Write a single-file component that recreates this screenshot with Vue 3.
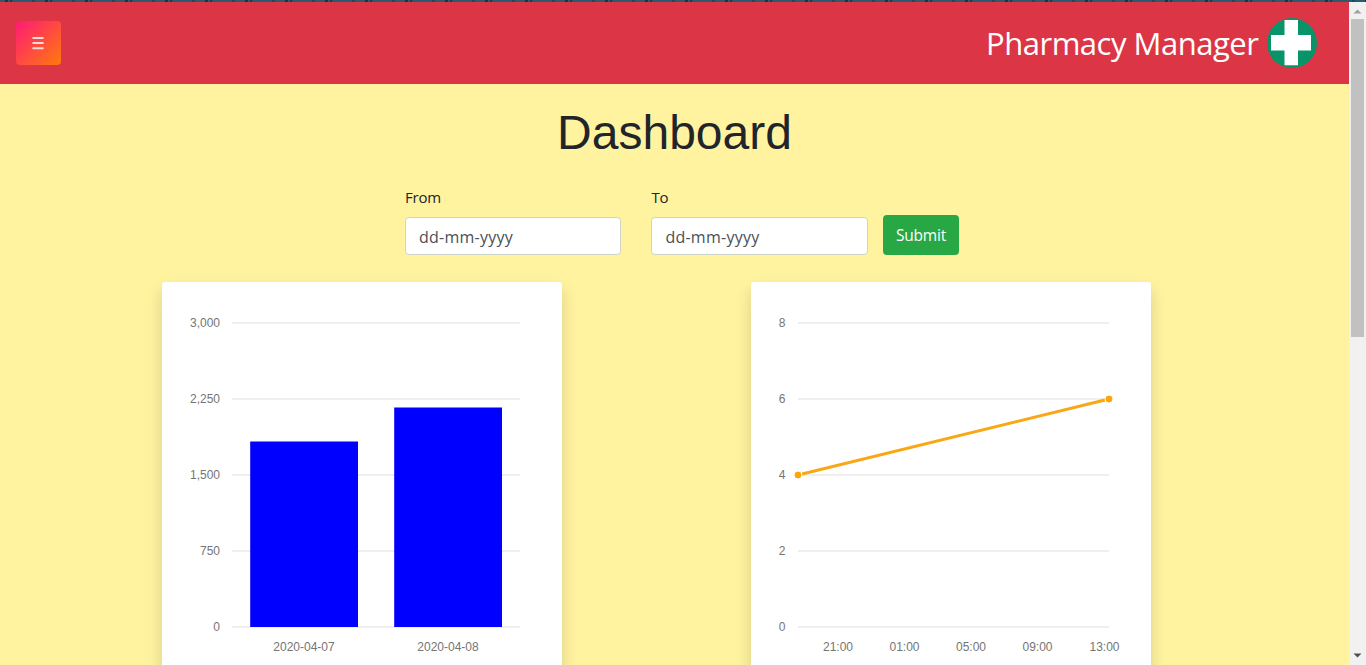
<script setup>
const rows = [41, 117, 193, 269, 345]
const salesTicks = ['3,000', '2,250', '1,500', '750', '0']
const orderTicks = ['8', '6', '4', '2', '0']
const bars = [
  { label: '2020-04-07', x: 88, y: 159.5 },
  { label: '2020-04-08', x: 232, y: 125.5 },
]
const hours = [
  { label: '21:00', x: 87 },
  { label: '01:00', x: 153.5 },
  { label: '05:00', x: 220 },
  { label: '09:00', x: 286.5 },
  { label: '13:00', x: 353.5 },
]
</script>

<template>
  <div class="window">
    <div class="edge"></div>
    <div class="viewport">
      <main class="page">
        <header class="navbar">
          <button class="menu" aria-label="Menu">
            <svg width="12" height="14" viewBox="0 0 12 14">
              <path d="M1.2 2h9.6M1.2 7.1h9.6M1.2 12.2h9.6" stroke="#ffdcd8" stroke-width="2" stroke-linecap="round" />
            </svg>
          </button>
          <div class="brand">
            <span class="brand-name">Pharmacy Manager</span>
            <svg width="50" height="50" viewBox="0 0 50 50">
              <circle cx="25" cy="25" r="25" fill="#089468" />
              <path d="M17.500 2h13.500v15H44v15.500H31v14.800H17.500V32.500H4V17h13.500z" fill="#fff" />
            </svg>
          </div>
        </header>

        <h1 class="title">Dashboard</h1>

        <form class="filters" @submit.prevent>
          <div class="field">
            <label>From</label>
            <div class="control"><span>dd-mm-yyyy</span></div>
          </div>
          <div class="field">
            <label>To</label>
            <div class="control"><span>dd-mm-yyyy</span></div>
          </div>
          <button class="submit">Submit</button>
        </form>

        <section class="cards">
          <article class="card">
            <svg class="chart" width="400" height="400" viewBox="0 0 400 400">
              <g v-for="(y, i) in rows" :key="y">
                <path :d="`M70 ${y}H358`" class="grid" />
                <text x="58" :y="y + 4" text-anchor="end">{{ salesTicks[i] }}</text>
              </g>
              <g v-for="b in bars" :key="b.label">
                <rect :x="b.x + 0.2" :y="b.y" width="107.800" :height="345 - b.y" fill="#00f" />
                <text :x="b.x + 54" y="369" text-anchor="middle">{{ b.label }}</text>
              </g>
            </svg>
          </article>
          <article class="card">
            <svg class="chart" width="400" height="400" viewBox="0 0 400 400">
              <g v-for="(y, i) in rows" :key="y">
                <path :d="`M47 ${y}H358`" class="grid" />
                <text x="34.500" :y="y + 4" text-anchor="end">{{ orderTicks[i] }}</text>
              </g>
              <path d="M47 193L358 117" stroke="#f9a715" stroke-width="3" />
              <circle cx="47" cy="193" r="4" class="dot" />
              <circle cx="358" cy="117" r="4" class="dot" />
              <text v-for="h in hours" :key="h.label" :x="h.x" y="369" text-anchor="middle">{{ h.label }}</text>
            </svg>
          </article>
        </section>
      </main>

      <aside class="scrollbar">
        <svg width="9" height="5" viewBox="0 0 9 5"><path d="M0.500 4.500L4.500 0.500L8.500 4.500z" fill="#a0a0a0" /></svg>
        <div class="thumb"></div>
        <svg class="down" width="9" height="5" viewBox="0 0 9 5"><path d="M0.500 0.500L4.500 4.500L8.500 0.500z" fill="#505050" /></svg>
      </aside>
    </div>
  </div>
</template>

<style>
body {
  overflow: hidden;
}
</style>

<style scoped>
* {
  box-sizing: border-box;
}
.window {
  width: 1366px;
  height: 665px;
  display: flex;
  flex-direction: column;
  overflow: hidden;
  font-family: "Open Sans", "Noto Sans", sans-serif;
  font-size: 16px;
  line-height: 24px;
  color: #212529;
}
.edge {
  height: 2px;
  flex: none;
  background: repeating-linear-gradient(90deg, #2c5b70 0 5px, #173444 5px 8px, #2c5b70 8px 10px, #1b3d4e 10px 12px, #2c5b70 12px 32px, #224a5c 32px 35px, #2c5b70 35px 40px);
}
.viewport {
  display: flex;
  flex: 1;
  min-height: 0;
}
.page {
  width: 1349px;
  background: #fff3a0;
  overflow: hidden;
}
.navbar {
  height: 82px;
  background: #dc3646;
  display: flex;
  align-items: center;
  justify-content: space-between;
  padding: 0 32px 0 16px;
}
.menu {
  width: 45px;
  height: 44px;
  display: flex;
  align-items: center;
  justify-content: center;
  padding: 0 2px 0 0;
  border: 0;
  border-radius: 4px;
  background: linear-gradient(135deg, #ff1a75, #ff7a0d);
}
.brand {
  display: flex;
  align-items: center;
  gap: 10px;
  color: #fff;
}
.brand-name {
  width: 271px;
  font-size: 31px;
  line-height: 48px;
  letter-spacing: -0.48px;
  white-space: nowrap;
}
.title {
  margin: 20px 0 0;
  text-align: center;
  font: 400 48px/58px "Liberation Sans", Arial, sans-serif;
}
.filters {
  display: flex;
  align-items: flex-end;
  margin: 24px 0 0 405px;
  height: 69px;
}
.field {
  width: 216.400px;
  margin-right: 30px;
}
.field + .field {
  margin-right: 15.200px;
}
label {
  display: block;
  font-size: 15px;
  letter-spacing: -0.2px;
  margin-bottom: 8px;
}
.control {
  height: 38px;
  border: 1px solid #ced4c8;
  border-radius: 4px;
  background: #fff;
  color: #495057;
  padding: 7px 13px 5px;
  letter-spacing: 0.25px;
}
.submit {
  width: 76px;
  height: 40px;
  border: 0;
  border-radius: 4px;
  background: #28a745;
  color: #fff;
  font: inherit;
  font-size: 15.500px;
  letter-spacing: -0.2px;
  padding: 0;
}
.cards {
  display: flex;
  gap: 189px;
  margin: 27px 0 0 162px;
}
.card {
  width: 400px;
  height: 400px;
  background: #fff;
  border-radius: 3px;
  box-shadow: 0 8px 16px rgba(0, 0, 0, 0.15);
}
.chart {
  display: block;
}
.chart text {
  font: 12px "Liberation Sans", Arial, sans-serif;
  fill: #757575;
}
.grid {
  stroke: #efefef;
  stroke-width: 2;
}
.dot {
  fill: #ffa50a;
  stroke: #fff;
  stroke-width: 1;
}
.scrollbar {
  width: 17px;
  background: #f1f1f1;
  display: flex;
  flex-direction: column;
  align-items: center;
  padding: 7px 0;
}
.thumb {
  width: 13px;
  height: 318px;
  margin-top: 5px;
  background: #c1c1c1;
}
.down {
  margin-top: auto;
}
</style>
